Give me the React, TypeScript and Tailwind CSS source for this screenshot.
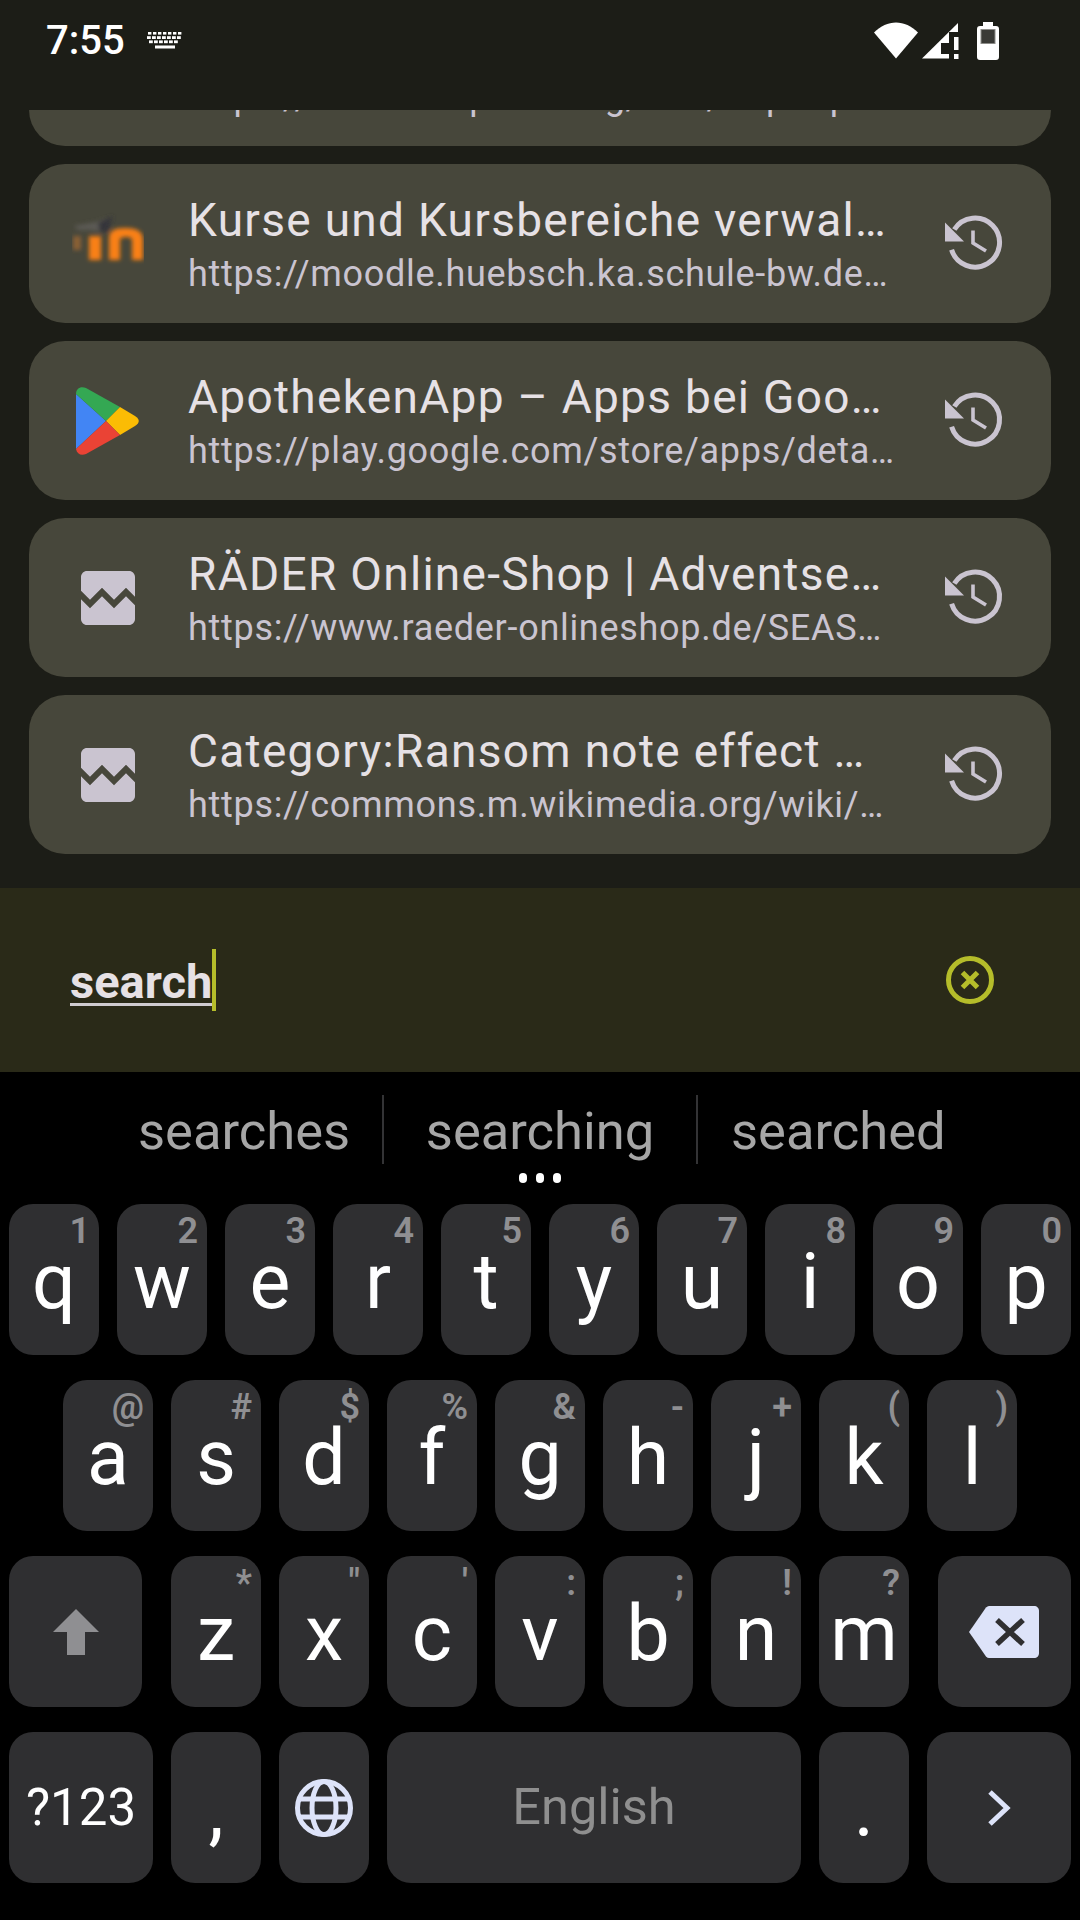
import React from "react";

const rows = [
  [["q","1"],["w","2"],["e","3"],["r","4"],["t","5"],["y","6"],["u","7"],["i","8"],["o","9"],["p","0"]],
  [["a","@"],["s","#"],["d","$"],["f","%"],["g","&"],["h","-"],["j","+"],["k","("],["l",")"]],
];
const row3 = [["z","*"],["x","\""],["c","'"],["v",":"],["b",";"],["n","!"],["m","?"]];

function Key({ label, hint }: { label: string; hint?: string }) {
  return (
    <div className="relative flex h-[151px] w-[90px] items-center justify-center rounded-[24px] bg-[#2f2f31] pt-[5px] text-[77px] leading-none text-white">
      {label}
      {hint && (
        <span className="absolute right-[9px] top-[5px] text-[36px] leading-[44px] font-semibold text-[#8f8f92]">{hint}</span>
      )}
    </div>
  );
}

function Fn({ w, children }: { w: string; children: React.ReactNode }) {
  return (
    <div className={`flex h-[151px] items-center justify-center rounded-[24px] bg-[#2f2f31] ${w}`}>{children}</div>
  );
}

function History() {
  return (
    <svg width="70" height="70" viewBox="0 0 70 70" className="mr-[41px] ml-[43px] shrink-0" fill="none">
      <path d="M14.3 20.5A24.5 24.5 0 1 1 11.6 40.7" stroke="#cac4d0" strokeWidth="5" />
      <path d="M5 13.500L24 32.500H5Z" fill="#cac4d0" />
      <path d="M33 21.500V34L46 42" stroke="#cac4d0" strokeWidth="3.6" />
    </svg>
  );
}

function Broken() {
  return (
    <svg width="72" height="72" viewBox="0 0 24 24" fill="#cac4d0">
      <path d="M21 5v6.59l-3-3.01-4 4.01-4-4-4 4-3-3.01V5c0-1.1.9-2 2-2h14c1.1 0 2 .9 2 2zm-3 6.42l3 3.01V19c0 1.1-.9 2-2 2H5c-1.1 0-2-.9-2-2v-6.58l3 2.99 4-4 4 4 4-3.99z" />
    </svg>
  );
}

function Play() {
  return (
    <svg width="72" height="72" viewBox="0 0 72 72">
      <path d="M4 9V64L34 36Z" fill="#4285f4" />
      <path d="M4 9C4 3 9 1 14 3L48 22L34 36Z" fill="#34a853" />
      <path d="M48 22L63 31C68 34 68 38 63 41L48 50L34 36Z" fill="#fbbc04" />
      <path d="M34 36L48 50L14 69C9 71 5 69 4 64Z" fill="#ea4335" />
    </svg>
  );
}

function Moodle() {
  return (
    <svg width="72" height="72" viewBox="0 0 72 72">
      <defs>
        <filter id="mb" x="-20%" y="-20%" width="140%" height="140%">
          <feGaussianBlur stdDeviation="2" />
        </filter>
      </defs>
      <g filter="url(#mb)">
        <path d="M2 18L24 14L36 10L30 24L18 22L6 22Z" fill="#5c5a54" />
        <path d="M26 15L41 8L36 24L28 24Z" fill="#35353a" />
        <rect x="1" y="28" width="8" height="14" fill="#8a6034" />
        <rect x="17" y="28" width="12" height="24" fill="#f98012" />
        <path d="M37 52V30C37 23 42 20 53 20C66 20 71 24 71 32V52H60V32C60 30 58 29 54 29C50 29 48 30 48 32V52Z" fill="#f98012" />
      </g>
    </svg>
  );
}

const items = [
  { icon: <Broken />, title: "Wikipedia", url: "https://de.m.wikipedia.org/wiki/Kapitop…" },
  { icon: <Moodle />, title: "Kurse und Kursbereiche verwal…", url: "https://moodle.huebsch.ka.schule-bw.de…" },
  { icon: <Play />, title: "ApothekenApp – Apps bei Goo…", url: "https://play.google.com/store/apps/deta…" },
  { icon: <Broken />, title: "RÄDER Online-Shop | Adventse…", url: "https://www.raeder-onlineshop.de/SEAS…" },
  { icon: <Broken />, title: "Category:Ransom note effect …", url: "https://commons.m.wikimedia.org/wiki/…" },
];

export default function App() {
  return (
    <div className="flex h-[1920px] w-[1080px] flex-col overflow-hidden bg-[#1c1d17] [font-family:Roboto,sans-serif]">
      {/* status bar */}
      <div className="flex h-[110px] shrink-0 items-start pl-[46px] pr-[81px]">
        <span className="mt-[17px] text-[40px] leading-[48px] font-medium text-white">7:55</span>
        <svg width="36" height="18" viewBox="0 0 36 18" className="ml-[22px] mt-[31px]" fill="#fff">
          {[0, 5, 10, 15, 20, 25, 30].map((x) => (
            <rect key={x} x={x + 1} y="1" width="3.4" height="2.6" />
          ))}
          {[0, 5, 10, 15, 20, 25, 30].map((x) => (
            <rect key={x} x={x} y="5.2" width="3.8" height="2.8" />
          ))}
          {[2, 7, 12, 17, 22, 27].map((x) => (
            <rect key={x} x={x} y="9.4" width="3.8" height="2.8" />
          ))}
          <rect x="8" y="14.5" width="20" height="3" />
        </svg>
        <div className="flex-1" />
        <svg width="46" height="38" viewBox="0 0 46 38" className="mt-[22px]" fill="#fff">
          <path d="M23 36.5L1 10.5C14 -3 32 -3 45 10.5Z" />
        </svg>
        <svg width="38" height="38" viewBox="0 0 38 38" className="mt-[22px] ml-[2px]">
          <path d="M1 36.5L37 1V36.5Z" fill="#fff" />
          <rect x="28" y="10" width="10" height="28" fill="#1c1d17" />
          <rect x="20" y="21" width="9" height="11" fill="#1c1d17" />
          <rect x="33" y="15" width="4.5" height="13" fill="#fff" />
          <rect x="33" y="32" width="4.5" height="5" fill="#fff" />
        </svg>
        <svg width="22" height="38" viewBox="0 0 22 38" className="mt-[22px] ml-[18px]">
          <path d="M6 0H16V4H19C21 4 22 5 22 7V35C22 37 21 38 19 38H3C1 38 0 37 0 35V7C0 5 1 4 3 4H6Z" fill="#fff" />
          <rect x="4" y="7.5" width="14" height="14" fill="#3a3a36" stroke="#8c8c88" strokeWidth="1" />
        </svg>
      </div>

      {/* list */}
      <div className="flex h-[778px] shrink-0 flex-col justify-end gap-[18px] overflow-hidden px-[29px] pb-[34px]">
        {items.map((it) => (
          <div key={it.url} className="flex h-[159px] shrink-0 items-center rounded-[36px] bg-[#47473b] pl-[43px]">
            <div className="h-[72px] w-[72px] shrink-0">{it.icon}</div>
            <div className="ml-[44px] min-w-0 flex-1 whitespace-nowrap pt-[14px]">
              <div className="text-[46px] leading-[48px] tracking-[1.3px] text-[#e6e1e5]">{it.title}</div>
              <div className="text-[36px] leading-[60.5px] tracking-[0.7px] text-[#cac4d0]">{it.url}</div>
            </div>
            <History />
          </div>
        ))}
      </div>

      {/* search */}
      <div className="flex h-[184px] shrink-0 items-center bg-[#2a2a18] pl-[70px] pr-[86px]">
        <span className="mt-[4px] text-[47px] leading-[62px] font-bold text-[#e6e1e5] underline decoration-[#d0ccd0] decoration-[3px] underline-offset-[5px]">search</span>
        <span className="h-[62px] w-[4px] bg-[#b5bd2a]" />
        <div className="flex-1" />
        <svg width="48" height="48" viewBox="0 0 48 48" fill="none" stroke="#b5bd2a" strokeWidth="5">
          <circle cx="24" cy="24" r="21.5" />
          <path d="M16.5 16.5L31.5 31.5M31.5 16.5L16.5 31.5" />
        </svg>
      </div>

      {/* keyboard */}
      <div className="flex flex-1 flex-col bg-black">
        <div className="relative flex h-[132px] shrink-0 items-start pt-[23px] text-[52.5px] leading-none text-[#a6a6a6]">
          <div className="flex h-[69px] w-full items-center">
            <span className="w-[382px] pl-[138px] pt-[4px]">searches</span>
            <span className="h-[69px] w-[2px] bg-[#333335]" />
            <span className="w-[312px] pt-[4px] text-center">searching</span>
            <span className="h-[69px] w-[2px] bg-[#333335]" />
            <span className="pl-[33px] pt-[4px]">searched</span>
          </div>
          <div className="absolute bottom-[21px] left-[519px] flex gap-[9px]">
            <span className="h-[10px] w-[8px] rounded-full bg-white" />
            <span className="h-[10px] w-[8px] rounded-full bg-white" />
            <span className="h-[10px] w-[8px] rounded-full bg-white" />
          </div>
        </div>
        <div className="flex flex-col gap-[25px]">
          {rows.map((r, i) => (
            <div key={i} className="flex justify-center gap-[18px]">
              {r.map(([l, h]) => (
                <Key key={l} label={l} hint={h} />
              ))}
            </div>
          ))}
          <div className="flex gap-[18px] px-[9px]">
            <Fn w="w-[133px] mr-[11px]">
              <svg width="46" height="46" viewBox="0 0 46 46" fill="#8f8f92">
                <path d="M23 0L46 23H32V46H14V23H0Z" />
              </svg>
            </Fn>
            {row3.map(([l, h]) => (
              <Key key={l} label={l} hint={h} />
            ))}
            <Fn w="w-[133px] ml-[11px]">
              <svg width="70" height="52" viewBox="0 0 70 52" className="mr-[1px]">
                <path d="M17 1.5C18 .5 19 0 20 0H65C68 0 70 2 70 5V47C70 50 68 52 65 52H20C19 52 18 51.500 17 50.500L0 26Z" fill="#dde3f9" />
                <path d="M28 14L54 38M54 14L28 38" stroke="#2f2f31" strokeWidth="5.500" fill="none" />
              </svg>
            </Fn>
          </div>
          <div className="flex gap-[18px] px-[9px]">
            <Fn w="w-[144px]">
              <span className="text-[51px] leading-none text-white">?123</span>
            </Fn>
            <Key label="," />
            <Fn w="w-[90px]">
              <svg width="60" height="60" viewBox="0 0 60 60" fill="none" stroke="#dde3f9" strokeWidth="5">
                <circle cx="30" cy="30" r="26.500" />
                <ellipse cx="30" cy="30" rx="12" ry="26.500" />
                <path d="M5 21H55M5 39H55" />
              </svg>
            </Fn>
            <Fn w="w-[414px]">
              <span className="text-[50.5px] leading-none text-[#8f8f8f]">English</span>
            </Fn>
            <Key label="." />
            <Fn w="w-[144px]">
              <svg width="24" height="36" viewBox="0 0 24 36" fill="none" stroke="#dde3f9" strokeWidth="5">
                <path d="M3 2L20 18L3 34" />
              </svg>
            </Fn>
          </div>
        </div>
      </div>
    </div>
  );
}
